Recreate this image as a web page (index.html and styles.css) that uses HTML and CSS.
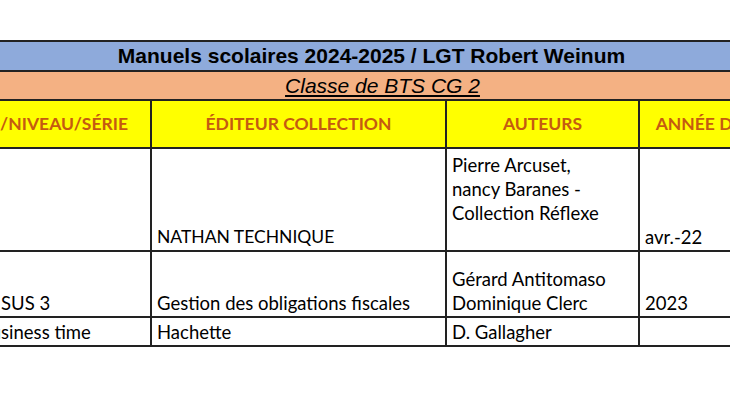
FILE: index.html
```html
<!DOCTYPE html>
<html lang="fr">
<head>
<meta charset="utf-8">
<title>Manuels scolaires 2024-2025</title>
<link rel="stylesheet" href="styles.css">
</head>
<body>
<div class="viewport">
  <div class="sheet">
    <div class="cell span title">Manuels scolaires 2024-2025 / LGT Robert Weinum</div>
    <div class="cell span classe"><span class="u">Classe de BTS CG 2</span></div>

    <div class="cell head h1">/NIVEAU/SÉRIE</div>
    <div class="cell head">ÉDITEUR COLLECTION</div>
    <div class="cell head">AUTEURS</div>
    <div class="cell head">ANNÉE DE PARUTION</div>

    <div class="cell data"></div>
    <div class="cell data caps">NATHAN TECHNIQUE</div>
    <div class="cell data">Pierre Arcuset,<br>nancy Baranes -<br>Collection Réflexe<br>&nbsp;</div>
    <div class="cell data">avr.-22</div>

    <div class="cell data c1a">SUS 3</div>
    <div class="cell data">Gestion des obligations fiscales</div>
    <div class="cell data">Gérard Antitomaso<br>Dominique Clerc</div>
    <div class="cell data">2023</div>

    <div class="cell data c1b">Business time</div>
    <div class="cell data">Hachette</div>
    <div class="cell data">D. Gallagher</div>
    <div class="cell data"></div>
  </div>
</div>
</body>
</html>
```

FILE: styles.css
```css
html, body {
  margin: 0;
  padding: 0;
  background: #ffffff;
}
.viewport {
  width: 730px;
  height: 410px;
  overflow: hidden;
  padding-top: 40px;
  box-sizing: border-box;
}
.sheet {
  display: grid;
  grid-template-columns: 173px 295px 193px 214px;
  grid-template-rows: 30px 29px 48px 103px 66px 29px;
  margin-left: -23px;
  width: 877px;
  border-top: 2px solid #222;
  border-left: 2px solid #222;
  box-sizing: border-box;
}
.cell {
  border-right: 2px solid #222;
  border-bottom: 2px solid #222;
  box-sizing: border-box;
  overflow: hidden;
  white-space: nowrap;
}
.span {
  grid-column: 1 / -1;
  font-family: "Liberation Sans", Arial, sans-serif;
  text-align: center;
  color: #000;
}
.title {
  background: #8eaadb;
  font-weight: bold;
  font-size: 21px;
  line-height: 28px;
  padding-right: 88px;
}
.classe {
  background: #f4b183;
  font-style: italic;
  font-size: 21px;
  line-height: 27px;
  padding-left: 22px;
  padding-right: 88px;
}
.u {
  text-decoration: underline;
  text-underline-offset: 2px;
}
.head {
  background: #ffff00;
  color: #c55a11;
  font-family: Lato, "Open Sans", sans-serif;
  font-weight: bold;
  font-size: 17.5px;
  display: flex;
  align-items: center;
  justify-content: center;
  padding-bottom: 2px;
}
.h1 {
  justify-content: flex-end;
  padding-right: 22px;
}
.data {
  font-family: Lato, "Open Sans", sans-serif;
  font-size: 18.5px;
  line-height: 24px;
  color: #000;
  display: flex;
  align-items: flex-end;
  padding: 0 4px 1px 5px;
}
.caps {
  font-size: 17.5px;
}
.c1a {
  padding-left: 22px;
}
.c1b {
  padding-left: 0;
}
```
